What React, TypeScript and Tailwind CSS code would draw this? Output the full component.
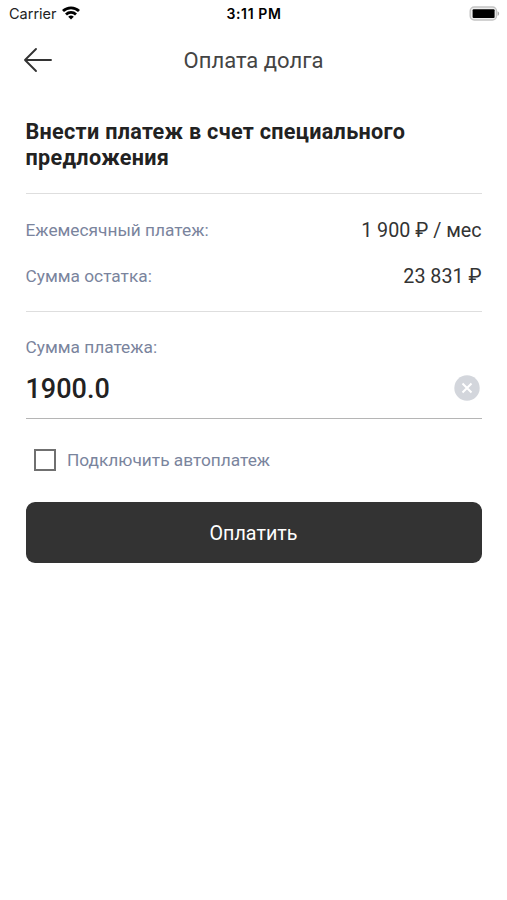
import { FC, ReactNode } from 'react';

const StatusBar: FC = () => {
  return (
    <div className="grid h-[27px] grid-cols-3 items-center pl-[9px] pr-[7px] font-['Inter',sans-serif] text-black">
      <div className="flex items-center gap-[5px]">
        <span className="text-[14.5px] leading-[27px] text-[#222]">Carrier</span>
        <svg width="18" height="14" viewBox="0 0 18 14" className="-mt-px" fill="none" stroke="#000" strokeWidth="2.8">
          <path d="M1 5.1a11.4 11.4 0 0 1 16 0" />
          <path d="M4 8.4a7.2 7.2 0 0 1 10 0" />
          <path d="M9 13.6 6.2 10.8a4 4 0 0 1 5.6 0z" fill="#000" stroke="none" />
        </svg>
      </div>
      <span className="pr-px text-center text-[14px] font-semibold leading-[27px] tracking-[0.6px]">3:11 PM</span>
      <svg className="justify-self-end" width="31" height="15" viewBox="0 0 31 15">
        <rect x="1.2" y="1" width="26.3" height="13" rx="4" fill="#eee" stroke="#c4c4c4" strokeWidth="1.4" />
        <rect x="3.6" y="3.2" width="22" height="8.8" rx="1" fill="#000" />
        <path d="M28.6 5.2c2 .8 2 3.8 0 4.6z" fill="#a8a8a8" />
      </svg>
    </div>
  );
};

const Header: FC = () => {
  return (
    <header className="grid h-[66px] grid-cols-[60px_1fr_60px] items-center">
      <button type="button" aria-label="Назад" className="pl-[23px]">
        <svg width="30" height="26" viewBox="0 0 30 26" fill="none" stroke="#333" strokeWidth="1.9" strokeLinecap="round" strokeLinejoin="round">
          <path d="M28 13H2M13 2 2 13l11 11" />
        </svg>
      </button>
      <h1 className="text-center text-[22px] text-[#444]">Оплата долга</h1>
    </header>
  );
};

const Row: FC<{ label: string; children: ReactNode }> = ({ label, children }) => {
  return (
    <div className="flex h-[46px] items-center justify-between">
      <span className="text-[17.3px] text-[#7a849d]">{label}</span>
      <span className="text-[19.7px] text-[#333]">{children}</span>
    </div>
  );
};

export default function App() {
  return (
    <div className="h-[900px] w-[507px] bg-white font-['Roboto',sans-serif]">
      <StatusBar />
      <Header />
      <main className="flex flex-col px-[25.5px] pt-[26px]">
        <h2 className="h-[74px] text-[21.6px] font-bold leading-[26px] tracking-[0.3px] text-[#222]">
          Внести платеж в счет специального
          <br />
          предложения
        </h2>
        <div className="h-[119px] border-y border-[#dedede] pt-[14px]">
          <Row label="Ежемесячный платеж:">1 900 ₽ / мес</Row>
          <Row label="Сумма остатка:">23 831 ₽</Row>
        </div>
        <div className="h-[107px] border-b-[1.5px] border-[#b5b5b5] pt-[23px]">
          <div className="text-[17.3px] leading-[24px] text-[#7a849d]">Сумма платежа:</div>
          <div className="flex h-[58px] items-center justify-between pr-[2px]">
            <span className="pt-[2px] text-[27px] font-medium text-[#222]">1900.0</span>
            <svg width="26" height="26" viewBox="0 0 26 26">
              <circle cx="13" cy="13" r="12.7" fill="#d3d6dc" />
              <path d="m8.5 8.5 9 9m0-9-9 9" stroke="#fff" strokeWidth="2" />
            </svg>
          </div>
        </div>
        <div className="flex h-[83px] items-center gap-[11px] pl-[8.5px]">
          <span className="mb-px size-[22px] border-2 border-[#707070]" />
          <span className="text-[17.3px] text-[#7a849d]">Подключить автоплатеж</span>
        </div>
        <button type="button" className="h-[61px] rounded-[9px] bg-[#333] pt-[2px] text-[19.7px] text-white">
          Оплатить
        </button>
      </main>
    </div>
  );
}
